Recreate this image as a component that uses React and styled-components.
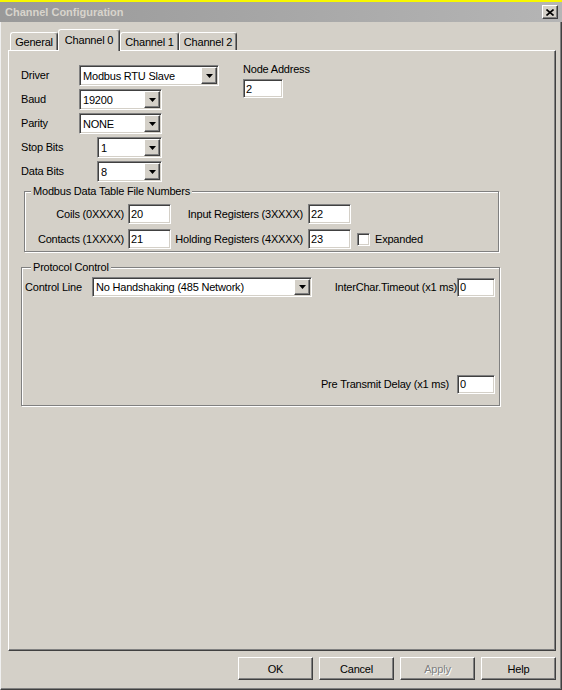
import React from 'react';
import styled, { createGlobalStyle, css } from 'styled-components';

const face = '#d4d0c8';

const GlobalStyle = createGlobalStyle`
  html, body {
    margin: 0;
    padding: 0;
    background: ${face};
  }
  body {
    font-family: "Liberation Sans", Arial, sans-serif;
    font-size: 11px;
    letter-spacing: -0.2px;
    color: #000;
  }
  * {
    box-sizing: border-box;
  }
`;

const sunken = css`
  border: 1px solid;
  border-color: #808080 #ffffff #ffffff #808080;
  box-shadow: inset 1px 1px 0 #404040, inset -1px -1px 0 ${face};
  background: #fff;
`;

const raised = css`
  border: 1px solid;
  border-color: #ffffff #404040 #404040 #ffffff;
  box-shadow: inset -1px -1px 0 #808080;
  background: ${face};
`;

const Window = styled.div`
  width: 562px;
  height: 690px;
  display: flex;
  flex-direction: column;
  background: ${face};
  overflow: hidden;
`;

const Highlight = styled.div`
  height: 2px;
  flex: none;
  background: #f8f800;
`;

const TitleBar = styled.div`
  height: 20px;
  flex: none;
  display: flex;
  align-items: center;
  justify-content: space-between;
  padding: 0 4px 0 5px;
  background: linear-gradient(90deg, #999999, #b5b5b5);
  color: #d8d4cc;
  font-weight: bold;
  letter-spacing: 0;
`;

const CloseButton = styled.div`
  ${raised};
  width: 16px;
  height: 14px;
  display: flex;
  align-items: center;
  justify-content: center;
`;

const Body = styled.div`
  flex: 1;
  display: flex;
  flex-direction: column;
  padding: 7px 0 0 7px;
  border-left: 1px solid #f0f0f0;
  border-right: 1px solid #404040;
  border-bottom: 1px solid #404040;
  box-shadow: inset 0 -1px 0 #808080, inset -1px 0 0 #808080;
`;

const TabRow = styled.div`
  display: flex;
  align-items: flex-end;
  height: 21px;
  margin-left: 2px;
  position: relative;
  z-index: 1;
`;

const Tab = styled.div`
  width: ${(p) => p.$w}px;
  height: ${(p) => (p.$active ? 22 : 18)}px;
  margin-bottom: ${(p) => (p.$active ? -1 : 0)}px;
  display: flex;
  align-items: center;
  justify-content: center;
  background: ${face};
  border-top: 1px solid #fff;
  border-left: 1px solid #fff;
  border-right: 1px solid #404040;
  box-shadow: inset -1px 0 0 #808080;
  border-radius: 3px 3px 0 0;
  padding-bottom: ${(p) => (p.$active ? 2 : 0)}px;
`;

const Panel = styled.div`
  width: 548px;
  height: 601px;
  flex: none;
  border: 1px solid;
  border-color: #fff #404040 #404040 #fff;
  box-shadow: inset -1px -1px 0 #808080;
  padding: 14px 0 0 12px;
  display: flex;
  flex-direction: column;
`;

const TopSection = styled.div`
  display: flex;
  align-items: flex-start;
`;

const FieldColumn = styled.div`
  display: flex;
  flex-direction: column;
  gap: 3px;
`;

const FieldRow = styled.div`
  display: flex;
  align-items: center;
  height: 21px;
`;

const Label = styled.span`
  flex: none;
  width: ${(p) => (p.$w ? `${p.$w}px` : 'auto')};
  text-align: ${(p) => (p.$right ? 'right' : 'left')};
  white-space: nowrap;
  line-height: 13px;
`;

const Combo = styled.div`
  ${sunken};
  flex: none;
  width: ${(p) => p.$w}px;
  height: ${(p) => p.$h || 21}px;
  display: flex;
  align-items: center;
  justify-content: space-between;
  padding: 0 1px 0 3px;
  white-space: nowrap;
`;

const DropButton = styled.div`
  ${raised};
  width: 16px;
  height: calc(100% - 2px);
  display: flex;
  align-items: center;
  justify-content: center;
`;

const NodeBlock = styled.div`
  display: flex;
  flex-direction: column;
  gap: 3px;
  margin: -2px 0 0 24px;
`;

const TextBox = styled.input`
  ${sunken};
  flex: none;
  width: ${(p) => p.$w}px;
  height: ${(p) => p.$h || 19}px;
  margin: 0 0 0 ${(p) => p.$ml || 0}px;
  padding: 0 2px;
  font: inherit;
  letter-spacing: inherit;
  color: #000;
  outline: none;
`;

const Group = styled.fieldset`
  margin: ${(p) => p.$mt}px 0 0 ${(p) => p.$ml}px;
  width: ${(p) => p.$w}px;
  min-width: 0;
  padding: ${(p) => p.$pad};
  border: 1px solid #808080;
  box-shadow: 1px 1px 0 #fff, inset 1px 1px 0 #fff;
  display: flex;
  flex-direction: column;
`;

const Legend = styled.legend`
  margin-left: 6px;
  padding: 0 2px;
  line-height: 13px;
  background: ${face};
`;

const GroupRows = styled.div`
  display: flex;
  flex-direction: column;
  gap: 5px;
`;

const GroupRow = styled.div`
  display: flex;
  align-items: center;
  height: 20px;
  margin-top: ${(p) => p.$mt || 0}px;
  justify-content: ${(p) => (p.$end ? 'flex-end' : 'flex-start')};
`;

const Gap = styled.span`
  flex: none;
  width: ${(p) => p.$w}px;
`;

const Spacer = styled.span`
  flex: 1;
`;

const CheckBox = styled.span`
  ${sunken};
  flex: none;
  width: 13px;
  height: 13px;
`;

const ButtonRow = styled.div`
  width: 548px;
  margin-top: 6px;
  display: flex;
  justify-content: flex-end;
  gap: 6px;
`;

const DialogButton = styled.div`
  border: 1px solid;
  border-color: #ffffff #404040 #404040 #ffffff;
  box-shadow: inset -1px -1px 0 #808080;
  width: 75px;
  height: 23px;
  display: flex;
  align-items: center;
  justify-content: center;
  color: ${(p) => (p.$disabled ? '#808080' : '#000')};
  text-shadow: ${(p) => (p.$disabled ? '1px 1px 0 #fff' : 'none')};
`;

const Arrow = () => (
  <svg width="7" height="4" viewBox="0 0 7 4">
    <polygon points="0,0 7,0 3.5,4" fill="#000" />
  </svg>
);

const Select = ({ value, w, h }) => (
  <Combo $w={w} $h={h}>
    <span>{value}</span>
    <DropButton>
      <Arrow />
    </DropButton>
  </Combo>
);

const CloseIcon = () => (
  <svg width="8" height="7" viewBox="0 0 8 7">
    <path d="M0.5 0.5 L7.5 6.5 M7.5 0.5 L0.5 6.5" stroke="#000" strokeWidth="1.6" />
  </svg>
);

const fields = [
  { label: 'Driver', value: 'Modbus RTU Slave', lw: 58, w: 140 },
  { label: 'Baud', value: '19200', lw: 58, w: 83 },
  { label: 'Parity', value: 'NONE', lw: 58, w: 83 },
  { label: 'Stop Bits', value: '1', lw: 76, w: 65 },
  { label: 'Data Bits', value: '8', lw: 76, w: 65 },
];

const tabs = [
  { name: 'General', w: 48 },
  { name: 'Channel 0', w: 62, active: true },
  { name: 'Channel 1', w: 59 },
  { name: 'Channel 2', w: 58 },
];

export default function App() {
  return (
    <Window>
      <GlobalStyle />
      <Highlight />
      <TitleBar>
        <span>Channel Configuration</span>
        <CloseButton>
          <CloseIcon />
        </CloseButton>
      </TitleBar>
      <Body>
        <TabRow>
          {tabs.map((t) => (
            <Tab key={t.name} $w={t.w} $active={t.active}>
              {t.name}
            </Tab>
          ))}
        </TabRow>
        <Panel>
          <TopSection>
            <FieldColumn>
              {fields.map((f) => (
                <FieldRow key={f.label}>
                  <Label $w={f.lw}>{f.label}</Label>
                  <Select value={f.value} w={f.w} />
                </FieldRow>
              ))}
            </FieldColumn>
            <NodeBlock>
              <Label>Node Address</Label>
              <TextBox $w={40} defaultValue="2" readOnly />
            </NodeBlock>
          </TopSection>

          <Group $mt={3} $ml={3} $w={475} $pad="6px 0 2px 0">
            <Legend>Modbus Data Table File Numbers</Legend>
            <GroupRows>
              <GroupRow>
                <Label $w={99} $right>Coils (0XXXX)</Label>
                <TextBox $w={43} $h={20} $ml={4} defaultValue="20" readOnly />
                <Label $w={132} $right>Input Registers (3XXXX)</Label>
                <TextBox $w={43} $h={20} $ml={5} defaultValue="22" readOnly />
              </GroupRow>
              <GroupRow>
                <Label $w={99} $right>Contacts (1XXXX)</Label>
                <TextBox $w={43} $h={20} $ml={4} defaultValue="21" readOnly />
                <Label $w={132} $right>Holding Registers (4XXXX)</Label>
                <TextBox $w={43} $h={20} $ml={5} defaultValue="23" readOnly />
                <Gap $w={6} />
                <CheckBox />
                <Gap $w={5} />
                <Label>Expanded</Label>
              </GroupRow>
            </GroupRows>
          </Group>

          <Group $mt={9} $ml={0} $w={479} $pad="3px 4px 11px 3px">
            <Legend>Protocol Control</Legend>
            <GroupRow>
              <Label $w={67}>Control Line</Label>
              <Select value="No Handshaking (485 Network)" w={220} h={20} />
              <Spacer />
              <Label>InterChar.Timeout (x1 ms)</Label>
              <TextBox $w={38} defaultValue="0" readOnly />
            </GroupRow>
            <GroupRow $mt={77} $end>
              <Label>Pre Transmit Delay (x1 ms)</Label>
              <TextBox $w={38} $ml={8} defaultValue="0" readOnly />
            </GroupRow>
          </Group>
        </Panel>
        <ButtonRow>
          <DialogButton>OK</DialogButton>
          <DialogButton>Cancel</DialogButton>
          <DialogButton $disabled>Apply</DialogButton>
          <DialogButton>Help</DialogButton>
        </ButtonRow>
      </Body>
    </Window>
  );
}
